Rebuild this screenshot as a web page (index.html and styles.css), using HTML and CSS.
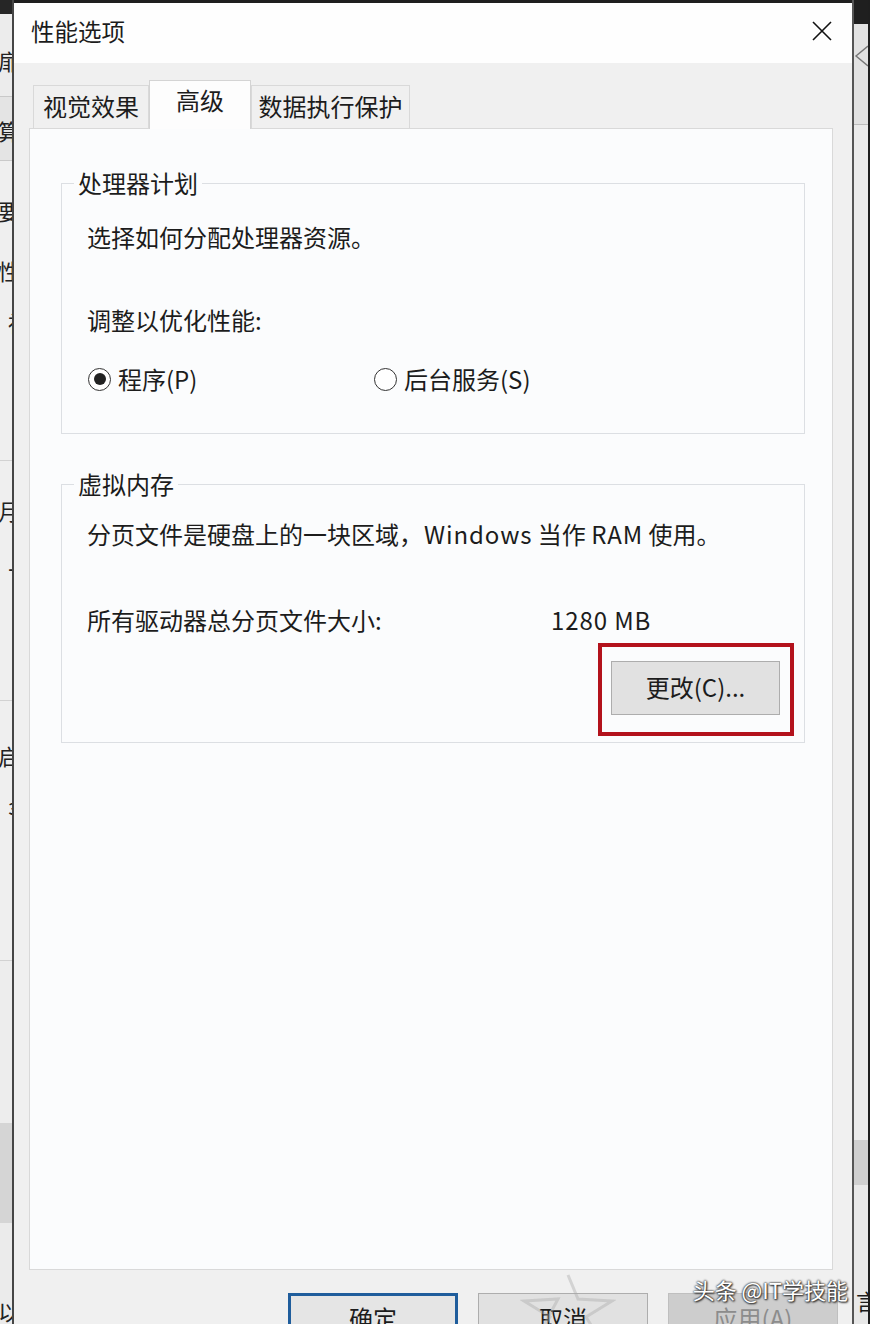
FILE: index.html
```html
<!DOCTYPE html>
<html lang="zh-CN">
<head>
    <meta charset="UTF-8">
    <title>性能选项</title>
    <link rel="stylesheet" href="styles.css">
</head>
<body>
    <div class="desk">
        <div class="back-left">
            <p class="bl bl-1">扉</p>
            <p class="bl bl-2">算</p>
            <p class="bl bl-3">要</p>
            <p class="bl bl-4">性</p>
            <p class="bl bl-5 sub">社</p>
            <p class="bl bl-6">月</p>
            <p class="bl bl-7 sub">丄</p>
            <p class="bl bl-8">启</p>
            <p class="bl bl-9 sub">з</p>
            <p class="bl bl-10">以</p>
        </div>

        <div class="dialog">
            <div class="titlebar">
                <span class="title">性能选项</span>
                <svg class="close" width="22" height="22" viewBox="0 0 22 22">
                    <path d="M2 2 L20 20 M20 2 L2 20" stroke="#111" stroke-width="1.6" fill="none"/>
                </svg>
            </div>

            <div class="tabs">
                <div class="tab tab-visual">视觉效果</div>
                <div class="tab tab-adv active">高级</div>
                <div class="tab tab-dep">数据执行保护</div>
            </div>

            <div class="panel">
                <fieldset class="group group-cpu">
                    <legend>处理器计划</legend>
                    <p class="line first">选择如何分配处理器资源。</p>
                    <p class="line gap">调整以优化性能:</p>
                    <div class="radios">
                        <label class="radio"><span class="dot checked"></span>程序(P)</label>
                        <label class="radio"><span class="dot"></span>后台服务(S)</label>
                    </div>
                </fieldset>

                <fieldset class="group group-vm">
                    <legend>虚拟内存</legend>
                    <p class="line first-vm">分页文件是硬盘上的一块区域，<span class="latin win">Windows</span> 当作 <span class="latin">RAM</span> 使用。</p>
                    <div class="size-row">
                        <span>所有驱动器总分页文件大小:</span>
                        <span class="latin">1280 MB</span>
                    </div>
                    <div class="change-row">
                        <div class="highlight">
                            <button class="btn">更改(C)...</button>
                        </div>
                    </div>
                </fieldset>
            </div>

            <div class="actions">
                <button class="btn btn-main default">确定</button>
                <button class="btn btn-main">取消</button>
                <button class="btn btn-main disabled">应用(A)</button>
            </div>

            <svg class="wm-star" width="96" height="60" viewBox="0 0 96 60">
                <path d="M48 2 L58 26 L92 28 L66 44 L76 60 M20 60 L30 44 L4 28 L38 26 Z" stroke="#a8a8a8" stroke-width="3" fill="none" opacity="0.4"/>
            </svg>
            <div class="watermark">头条 @IT学技能</div>
        </div>

        <div class="back-right">
            <svg class="br-x" width="14" height="22" viewBox="0 0 14 22">
                <path d="M14 1 L2 11 L14 21" stroke="#777" stroke-width="1.4" fill="none"/>
            </svg>
            <p class="br-char">言</p>
        </div>
    </div>
</body>
</html>
```

FILE: styles.css
```css
html, body {
    margin: 0;
    height: 1324px;
    overflow: hidden;
}
body {
    font-family: "Noto Sans CJK SC", "Microsoft YaHei", sans-serif;
    color: #1c1c1c;
    background: #1e1e1e;
}
.desk {
    display: flex;
    height: 1324px;
}

/* window behind, left side */
.back-left {
    width: 14px;
    border-right: 2px solid #464646;
    overflow: hidden;
    padding-top: 14px;
    box-sizing: border-box;
    background: linear-gradient(#262626 0 14px, #ececec 14px 96px, #c9c9c9 96px 97px,
        #e4e4e4 97px 160px, #c9c9c9 160px 161px, #efefef 161px 460px, #d2d2d2 460px 461px,
        #efefef 461px 700px, #d2d2d2 700px 701px, #efefef 701px 960px, #d2d2d2 960px 961px,
        #ededed 961px 1123px, #d5d5d5 1123px 1223px, #ebebeb 1223px);
}
.bl {
    margin: 0;
    height: 26px;
    line-height: 26px;
    font-size: 22px;
    white-space: nowrap;
    margin-left: -2px;
    color: #222;
}
.bl.sub { margin-left: 8px; }
.bl-1 { margin-top: 33px; }
.bl-2 { margin-top: 44px; }
.bl-3 { margin-top: 54px; }
.bl-4 { margin-top: 34px; }
.bl-5 { margin-top: 26px; }
.bl-6 { margin-top: 162px; }
.bl-7 { margin-top: 24px; }
.bl-8 { margin-top: 169px; }
.bl-9 { margin-top: 24px; }
.bl-10 { margin-top: 479px; }

/* window behind, right side */
.back-right {
    width: 14px;
    border-left: 2px solid #555;
    overflow: hidden;
    background: linear-gradient(#1f1f1f 0 24px, #e2e2e2 24px 124px, #bdbdbd 124px 125px,
        #ebebeb 125px 1140px, #cfcfcf 1140px 1185px, #e8e8e8 1185px);
}
.br-x {
    display: block;
    margin-top: 45px;
}
.br-char {
    margin: 1220px 0 0 2px;
    font-size: 22px;
    line-height: 26px;
    white-space: nowrap;
}

/* dialog */
.dialog {
    position: relative;
    width: 838px;
    margin-top: 3px;
    background: #f0f0f0;
    display: flex;
    flex-direction: column;
    overflow: hidden;
    font-size: 24px;
}
.dialog > * {
    flex-shrink: 0;
}
.latin {
    letter-spacing: 0.9px;
}
.latin.win {
    margin-left: 1px;
}
.titlebar {
    height: 60px;
    background: #fefefe;
    display: flex;
    align-items: center;
    justify-content: space-between;
    padding: 0 19px 4px 17px;
    box-sizing: border-box;
}
.title {
    font-size: 23.5px;
}
.close {
    display: block;
}

.tabs {
    display: flex;
    align-items: flex-end;
    margin: 17px 0 0 19px;
    height: 48px;
    position: relative;
    z-index: 1;
}
.tab {
    height: 43px;
    box-sizing: border-box;
    border: 1px solid #d9d9d9;
    border-bottom: none;
    background: #f0f0f0;
    line-height: 40px;
    text-align: center;
}
.tab-visual { width: 116px; }
.tab-adv { width: 102px; }
.tab-dep { width: 159px; }
.tab.active {
    height: 49px;
    margin-bottom: -1px;
    background: #fdfdfd;
    line-height: 38px;
    border-color: #d4d4d4;
}

.panel {
    height: 1142px;
    box-sizing: border-box;
    margin: 0 19px 0 15px;
    border: 1px solid #d9d9d9;
    background: #fbfcfd;
    padding-top: 39px;
}

.group {
    margin: 0 27px 0 31px;
    padding: 0 0 0 25px;
    border: 1px solid #dcdfe3;
    min-width: 0;
}
.group legend {
    margin-left: -13px;
    padding: 0 4px;
    line-height: 30px;
}
.line {
    margin: 0;
    line-height: 30px;
}
.group-cpu .first { margin-top: 24px; }
.group-cpu .gap { margin-top: 53px; }
.radios {
    display: grid;
    grid-template-columns: 286px auto;
    margin: 29px 0 39px 1px;
}
.radio {
    display: flex;
    align-items: center;
    gap: 7px;
    line-height: 30px;
}
.dot {
    width: 23px;
    height: 23px;
    box-sizing: border-box;
    border: 1.5px solid #333;
    border-radius: 50%;
    display: flex;
    align-items: center;
    justify-content: center;
    background: #fff;
}
.dot.checked::after {
    content: "";
    width: 12px;
    height: 12px;
    border-radius: 50%;
    background: #222;
}

.group-vm {
    margin-top: 35px;
}
.group-vm .first-vm { margin-top: 20px; }
.size-row {
    display: grid;
    grid-template-columns: 464px auto;
    margin-top: 56px;
    line-height: 30px;
}
.change-row {
    display: flex;
    justify-content: flex-end;
    margin: 8px 10px 6px 0;
}
.highlight {
    border: 4px solid #b3121c;
    padding: 14px 10px 17px 9px;
}

.btn {
    font-family: inherit;
    font-size: 24px;
    color: #1c1c1c;
    background: #e1e1e1;
    border: 1px solid #adadad;
    width: 169px;
    height: 54px;
    padding: 0 0 4px;
}

.actions {
    display: flex;
    justify-content: flex-end;
    gap: 20px;
    margin: 23px 14px 0 0;
}
.btn-main {
    width: 170px;
    height: 48px;
    flex-shrink: 0;
    padding: 0;
}
.btn-main.default {
    border: 3px solid #1f5d9c;
    background: #e5e5e5;
}
.btn-main.disabled {
    background: #cdcdcd;
    border-color: #bfbfbf;
    color: #8c8c8c;
}

.wm-star {
    position: absolute;
    left: 506px;
    top: 1270px;
}
.watermark {
    position: absolute;
    right: 4px;
    top: 1272px;
    font-size: 22px;
    line-height: 28px;
    color: #fff;
    text-shadow: 0 0 2px #333, 0 0 2px #333, 1px 1px 2px #222;
    white-space: nowrap;
}
```
